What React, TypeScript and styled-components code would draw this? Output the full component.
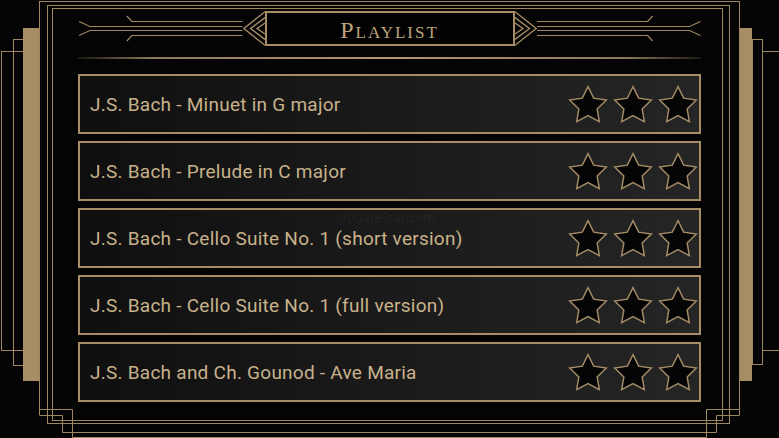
import React from "react";
import styled, { createGlobalStyle } from "styled-components";

const GOLD = "#a78d66";
const LINE = "#9f8762";
const TEXT = "#c8b28b";

const GlobalStyle = createGlobalStyle`
  html, body { margin: 0; padding: 0; background: #040404; }
  body { font-family: Roboto, "Liberation Sans", sans-serif; }
  #root { width: 779px; height: 438px; overflow: hidden; }
`;

const Page = styled.div`
  position: relative;
  display: flex;
  width: 779px;
  height: 438px;
  background: #040404;
  overflow: hidden;
`;

const Wing = styled.div`
  display: grid;
  grid-template: 1fr / 1fr;
  flex: none;
  width: 39px;
  height: 100%;
`;

const StepOutline = styled.div<{ $x: number; $y: number; $w: number; $h: number }>`
  grid-area: 1 / 1;
  align-self: start;
  justify-self: start;
  box-sizing: border-box;
  margin: ${(p) => p.$y}px 0 0 ${(p) => p.$x}px;
  width: ${(p) => p.$w}px;
  height: ${(p) => p.$h}px;
  border: 1px solid ${LINE};
`;

const PillarBar = styled(StepOutline)`
  border: none;
  background: ${GOLD};
`;

const FrameOuter = styled.div`
  position: relative;
  flex: none;
  box-sizing: border-box;
  width: 701px;
  height: 414px;
  margin-top: 1px;
  border: 1px solid ${LINE};
  border-bottom: none;
  padding: 3px 9px 0 7px;
`;

const FrameMiddle = styled.div`
  box-sizing: border-box;
  height: 419px;
  border: 1px solid ${LINE};
  padding: 2px 6px 0 4px;
`;

const FrameInner = styled.div`
  box-sizing: border-box;
  height: 413px;
  border: 1px solid ${LINE};
  padding: 2px 21px 0 25px;
  display: flex;
  flex-direction: column;
`;

const Header = styled.div`
  display: flex;
  height: 35px;
  flex: none;
`;

const Ornament = styled.svg<{ $flip?: boolean }>`
  display: block;
  flex: 1;
  height: 35px;
  transform: ${(p) => (p.$flip ? "scaleX(-1)" : "none")};
`;

const Chevron = styled.svg<{ $flip?: boolean }>`
  display: block;
  flex: none;
  width: 22px;
  height: 35px;
  transform: ${(p) => (p.$flip ? "scaleX(-1)" : "none")};
`;

const TitleBox = styled.div`
  flex: none;
  box-sizing: border-box;
  width: 250px;
  height: 35px;
  border: 2px solid ${GOLD};
  background: #020202;
  display: flex;
  align-items: center;
  justify-content: center;
  padding-top: 3px;
`;

const Title = styled.h1`
  margin: 0;
  font-family: "Liberation Serif", "DejaVu Serif", serif;
  font-weight: 400;
  font-size: 24px;
  font-variant: small-caps;
  letter-spacing: 2px;
  color: #bda47b;
  line-height: 1;
`;

const Divider = styled.div`
  flex: none;
  height: 2px;
  margin-top: 11px;
  background: linear-gradient(
    90deg,
    rgba(167, 141, 102, 0.15) 0%,
    rgba(167, 141, 102, 0.85) 12%,
    #b39870 50%,
    rgba(167, 141, 102, 0.85) 88%,
    rgba(167, 141, 102, 0.15) 100%
  );
`;

const List = styled.ul`
  list-style: none;
  margin: 15px 0 0;
  padding: 0;
  display: flex;
  flex-direction: column;
  gap: 7px;
`;

const Row = styled.li`
  box-sizing: border-box;
  height: 60px;
  border: 2px solid ${GOLD};
  background: linear-gradient(90deg, #0f0f0f 0%, #191919 45%, #252525 100%);
  display: flex;
  align-items: center;
  justify-content: space-between;
  padding: 2px 0 0 10px;
`;

const TrackName = styled.span`
  font-family: Roboto, "Liberation Sans", sans-serif;
  font-size: 19px;
  line-height: 22px;
  color: ${TEXT};
  letter-spacing: 0.25px;
`;

const Stars = styled.div`
  display: flex;
  gap: 1px;
  margin: 0 -1px 0 0;
`;

const StarIcon = styled.svg`
  display: block;
  width: 44px;
  height: 44px;
`;

const BottomOrnament = styled.svg`
  position: absolute;
  left: -1px;
  top: 406px;
  width: 701px;
  height: 30px;
  overflow: visible;
`;

const Watermark = styled.div`
  position: absolute;
  left: 337px;
  top: 211px;
  font-family: "Open Sans", "Liberation Sans", sans-serif;
  font-size: 13px;
  line-height: 13px;
  color: rgba(255, 255, 255, 0.06);
  pointer-events: none;
`;

const tracks = [
  "J.S. Bach - Minuet in G major",
  "J.S. Bach - Prelude in C major",
  "J.S. Bach - Cello Suite No. 1 (short version)",
  "J.S. Bach - Cello Suite No. 1 (full version)",
  "J.S. Bach and Ch. Gounod - Ave Maria",
];

const STAR =
  "M12 2l3.09 6.26L22 9.27l-5 4.87 1.18 6.88L12 17.77l-6.18 3.25L7 14.14 2 9.27l6.91-1.01L12 2z";

function Star() {
  return (
    <StarIcon viewBox="0 0 24 24">
      <path d={STAR} fill="#050505" stroke="#a38b66" strokeWidth={0.8} strokeLinejoin="miter" />
    </StarIcon>
  );
}

function HeaderOrnament({ flip }: { flip?: boolean }) {
  return (
    <Ornament $flip={flip} viewBox="0 0 165 35" preserveAspectRatio="none">
      <g stroke={LINE} strokeWidth={1.2} fill="none">
        <path d="M49 5 L54 10.5 H165" />
        <path d="M49 30 L54 24.5 H165" />
        <path d="M1 10.5 L12 15.5 H165" />
        <path d="M1 24.5 L12 19.5 H165" />
      </g>
    </Ornament>
  );
}

function TitleChevron({ flip }: { flip?: boolean }) {
  return (
    <Chevron $flip={flip} viewBox="0 0 22 35">
      <g stroke={GOLD} strokeWidth={1.4} fill="none">
        <path d="M22 0.7 L0.8 17.5 L22 34.3" />
        <path d="M22 6.5 L7.5 17.5 L22 28.5" />
        <path d="M22 12 L14 17.5 L22 23" />
      </g>
    </Chevron>
  );
}

function LeftWing() {
  return (
    <Wing>
      <StepOutline $x={1} $y={51} $w={23} $h={300} />
      <StepOutline $x={13} $y={39} $w={11} $h={327} />
      <PillarBar $x={23} $y={28} $w={16} $h={353} />
    </Wing>
  );
}

function RightWing() {
  return (
    <Wing>
      <StepOutline $x={22} $y={51} $w={24} $h={300} />
      <StepOutline $x={12} $y={39} $w={11} $h={326} />
      <PillarBar $x={0} $y={28} $w={12} $h={353} />
    </Wing>
  );
}

export default function App() {
  return (
    <>
      <GlobalStyle />
      <Page>
        <LeftWing />
        <FrameOuter>
          <FrameMiddle>
            <FrameInner>
              <Header>
                <HeaderOrnament />
                <TitleChevron />
                <TitleBox>
                  <Title>Playlist</Title>
                </TitleBox>
                <TitleChevron flip />
                <HeaderOrnament flip />
              </Header>
              <Divider />
              <List>
                {tracks.map((t) => (
                  <Row key={t}>
                    <TrackName>{t}</TrackName>
                    <Stars>
                      <Star />
                      <Star />
                      <Star />
                    </Stars>
                  </Row>
                ))}
              </List>
            </FrameInner>
          </FrameMiddle>
          <BottomOrnament viewBox="0 0 701 30">
            <g stroke={LINE} strokeWidth={1} fill="none">
              <path d="M0.5 1.5 H33.5 V29.5 H667.5 V1.5 H700.5" />
              <path d="M0.5 7.5 H23.5 V24.5 H677.5 V7.5 H700.5" />
            </g>
          </BottomOrnament>
        </FrameOuter>
        <RightWing />
        <Watermark>UpdateStar.com</Watermark>
      </Page>
    </>
  );
}
